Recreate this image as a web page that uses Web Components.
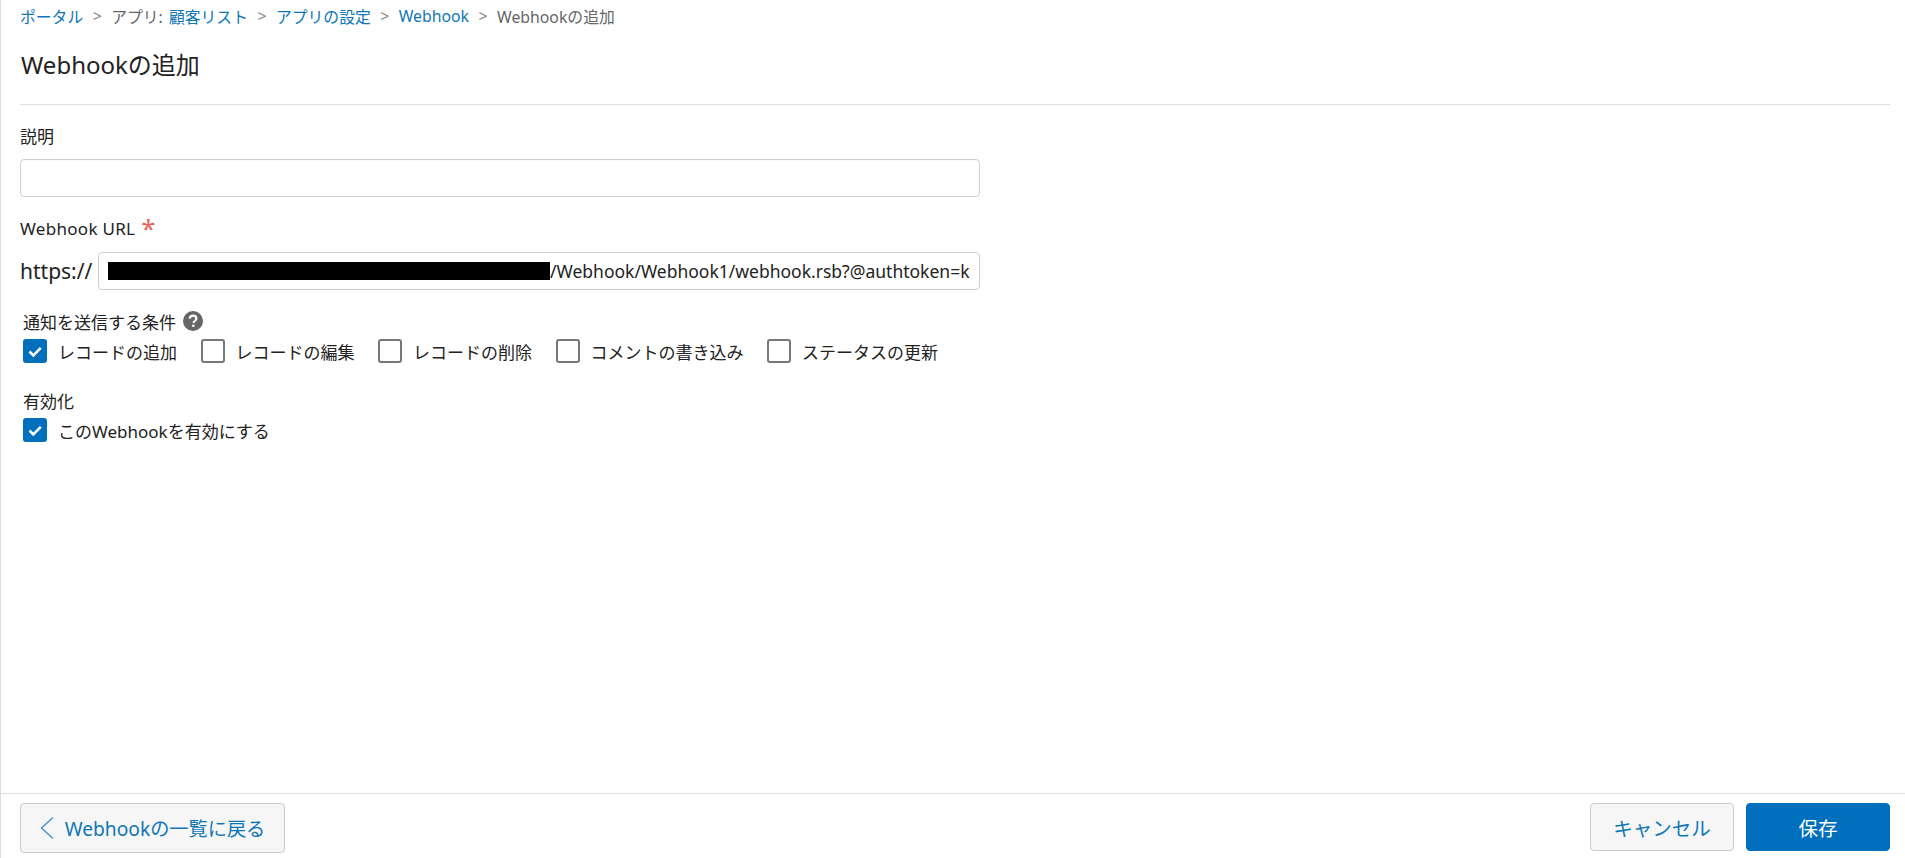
<!DOCTYPE html>
<html lang="ja"><head><meta charset="utf-8"><title>Webhookの追加</title>
<style>
html,body{margin:0;height:100%;background:#fff;overflow:hidden}
body{font-family:"Noto Sans","Noto Sans CJK JP",sans-serif;color:#222;font-size:17px}
</style></head><body>
<wh-page>
  <wh-crumbs slot="crumbs"></wh-crumbs>
  <span slot="title">Webhookの追加</span>
  <wh-field label="説明" style="margin-top:18px"><wh-input></wh-input></wh-field>
  <wh-field label="Webhook URL" required style="margin-top:19px;--ls:.3px">
    <wh-url></wh-url>
  </wh-field>
  <wh-field label="通知を送信する条件" help inset style="margin-top:19px">
    <wh-checks>
      <wh-check checked>レコードの追加</wh-check>
      <wh-check>レコードの編集</wh-check>
      <wh-check>レコードの削除</wh-check>
      <wh-check>コメントの書き込み</wh-check>
      <wh-check>ステータスの更新</wh-check>
    </wh-checks>
  </wh-field>
  <wh-field label="有効化" inset style="margin-top:25px">
    <wh-checks><wh-check checked>このWebhookを有効にする</wh-check></wh-checks>
  </wh-field>
  <wh-btn slot="left" kind="back" width="265">Webhookの一覧に戻る</wh-btn>
  <wh-btn slot="right" width="144">キャンセル</wh-btn>
  <wh-btn slot="right" kind="primary" width="144">保存</wh-btn>
</wh-page>
<script>
function def(name, html){
  customElements.define(name, class extends HTMLElement{
    constructor(){super();this.attachShadow({mode:'open'}).innerHTML=typeof html==='function'?html(this):html;}
  });
}
def('wh-page',`<style>
:host{display:flex;flex-direction:column;height:858px;box-sizing:border-box;border-left:1px solid #ddd}
.main{flex:1;padding:0 15px 0 19px;min-height:0}
.crumbs{height:32px;display:flex;align-items:center}
h1{margin:0;font-weight:400;font-size:24px;line-height:34px;height:73px;box-sizing:border-box;padding-top:16px;padding-left:1px;color:#222;border-bottom:1px solid #ddd}
footer{height:65px;box-sizing:border-box;border-top:1px solid #ddd;padding:9px 15px 0 19px;display:flex;justify-content:space-between;align-items:flex-start}
.r{display:flex;gap:12px}
</style>
<div class="main"><div class="crumbs"><slot name="crumbs"></slot></div><h1><slot name="title"></slot></h1><slot></slot></div>
<footer><slot name="left"></slot><div class="r"><slot name="right"></slot></div></footer>`);

def('wh-crumbs',`<style>
:host{display:flex;align-items:center;font-size:15.8px;color:#666;white-space:nowrap}
a{color:#0f76b5;text-decoration:none}
i{font-style:normal;color:#888;width:28px;text-align:center;display:inline-block}
.k{margin-left:2px}
</style><a>ポータル</a><i>&gt;</i><span>アプリ: <a class="k">顧客リスト</a></span><i>&gt;</i><a>アプリの設定</a><i>&gt;</i><a>Webhook</a><i>&gt;</i><span>Webhookの追加</span>`);

def('wh-field',el=>`<style>
:host{display:block}
.l{display:flex;align-items:center;height:24px;font-size:17px;letter-spacing:var(--ls,0);color:#222;margin-bottom:12px;white-space:nowrap}
:host([inset]) .l{padding-left:3px;margin-bottom:6px}
.s{color:#e8615a;font-size:26px;line-height:20px;margin-left:6px;height:20px}
svg{margin-left:7px;display:block}
</style><div class="l">${el.getAttribute('label')}${el.hasAttribute('required')?'<span class="s">*</span>':''}${el.hasAttribute('help')?'<svg width="20" height="20" viewBox="0 0 20 20"><circle cx="10" cy="10" r="10" fill="#666"/><path d="M6.7 7.6c.2-2 1.6-3 3.4-3 1.9 0 3.3 1.1 3.3 2.8 0 1.3-.7 1.9-1.6 2.6-.8.6-1.1 1-1.1 2" fill="none" stroke="#fff" stroke-width="2.2"/><rect x="9.2" y="13.6" width="2.3" height="2.3" fill="#fff"/></svg>':''}</div><slot></slot>`);

def('wh-input',`<style>
:host{display:block;width:960px;height:38px;box-sizing:border-box;border:1px solid #cfcfcf;border-radius:4px;background:#fff;box-shadow:inset 0 1px 2px rgba(0,0,0,.03)}
</style>`);

def('wh-url',`<style>
:host{display:flex;align-items:center;width:960px;font-size:21px;color:#222}
.p{width:78px;flex:none}
.b{flex:1;height:38px;box-sizing:border-box;border:1px solid #cfcfcf;border-radius:4px;display:flex;align-items:center;padding-left:9px;overflow:hidden;white-space:nowrap;font-size:17.5px}
.r{width:442px;height:18px;background:#000;flex:none}
</style><span class="p">https://</span><div class="b"><span class="r"></span><span>/Webhook/Webhook1/webhook.rsb?@authtoken=k</span></div>`);

def('wh-checks',`<style>:host{display:flex;padding-left:3px}</style><slot></slot>`);

def('wh-check',el=>`<style>
:host{display:flex;align-items:center;height:24px;margin-right:23.5px;font-size:17px;color:#222;white-space:nowrap}
.b{width:24px;height:24px;box-sizing:border-box;border:2px solid #777;border-radius:3px;margin-right:11px;flex:none;background:#fff}
:host([checked]) .b{background:#0070bd;border-color:#0070bd}
svg{display:block}
</style><span class="b">${el.hasAttribute('checked')?'<svg width="20" height="20" viewBox="0 0 20 20"><path d="M4.5 10.5l3.8 3.8 7.5-7.5" fill="none" stroke="#fff" stroke-width="2.6"/></svg>':''}</span><slot></slot>`);

def('wh-btn',el=>{const k=el.getAttribute('kind');return `<style>
:host{display:flex;align-items:center;justify-content:center;width:${el.getAttribute('width')}px;height:${k==='back'?50:48}px;box-sizing:border-box;border:1px solid #ccc;border-radius:4px;background:#f6f6f7;color:#0f76b5;font-size:19.5px;white-space:nowrap}
:host([kind=primary]){background:#0070bd;border-color:#0070bd;color:#fff}
:host([kind=back]){font-size:19.2px}
svg{margin-right:11px;flex:none}
</style>${k==='back'?'<svg width="14" height="24" viewBox="0 0 14 24"><path d="M13 1.5L1.5 12 13 22.5" fill="none" stroke="#3d8fc9" stroke-width="1.3"/></svg>':''}<slot></slot>`});
</script>
</body></html>
